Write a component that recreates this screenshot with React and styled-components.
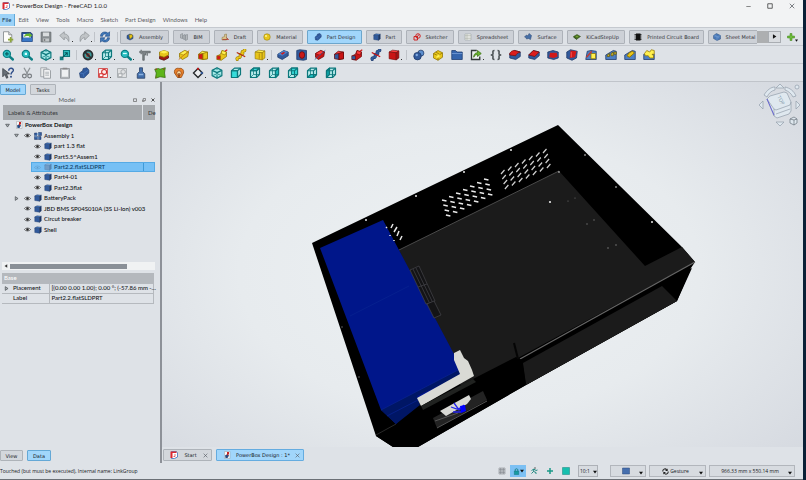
import React from "react";
import styled, { createGlobalStyle, css } from "styled-components";

const Global = createGlobalStyle`
  * { box-sizing: border-box; }
  html, body { margin: 0; background: #0a2036; }
  body, button, select, input, table {
    font-family: Lato, "Open Sans", sans-serif;
    font-size: 6px;
    line-height: 8px;
    color: #16181c;
  }
  button, select { margin: 0; padding: 0; border: 0; background: none; cursor: pointer; }
  svg { display: block; flex: none; }
`;

const Window = styled.div`
  display: flex;
  flex-direction: column;
  min-height: 100vh;
  margin-right: 3px;
  background: #dee2e7;
  border-bottom: 1px solid #6b7076;
`;
const TitleBar = styled.header`
  display: flex;
  align-items: center;
  height: 12px;
  padding-left: 2px;
  gap: 2px;
  background: #f2f3f4;
  h1 { flex: 1; margin: 0; font-size: 6px; font-weight: 400; color: #222; }
`;
const WindowButton = styled.button`
  display: grid;
  place-items: center;
  width: 22px;
  height: 12px;
`;
const MenuBar = styled.nav`
  display: flex;
  height: 15px;
  align-items: center;
  background: #f2f3f4;
`;
const MenuItem = styled.button`
  height: 12px;
  padding: 0 3px 0 ${(p) => (p.$active ? 2 : 3)}px;
  color: ${(p) => (p.$active ? "#16384f" : "#5c6065")};
  background: ${(p) => (p.$active ? "#9bd2f8" : "transparent")};
  border-right: 1px solid ${(p) => (p.$active ? "#62a9d8" : "transparent")};
`;
const ToolBar = styled.div`
  display: flex;
  align-items: center;
  height: 18px;
  overflow: hidden;
  border-top: 1px solid #c5c9cf;
`;
const ToolGroup = styled.div`
  display: flex;
  flex: none;
  justify-content: space-between;
  width: ${(p) => p.$width}px;
`;
const Separator = styled.i`
  flex: none;
  width: 1px;
  height: 10px;
  margin: 0 ${(p) => p.$gap || 3}px;
  background: #bfc3c9;
`;
const ToolButton = styled.button`
  position: relative;
  display: grid;
  place-items: center;
  width: 16px;
  height: 16px;
  ${(p) => p.$menu && css`
    &::after {
      content: "";
      position: absolute;
      right: 0;
      bottom: 3px;
      width: 1px;
      height: 1px;
      background: #333;
    }
  `}
`;
const Workbenches = styled.div`
  display: flex;
  flex: 1;
  min-width: 0;
  gap: 4px;
  overflow: hidden;
`;
const Workbench = styled.button`
  display: flex;
  flex: none;
  align-items: center;
  justify-content: center;
  gap: 5px;
  width: ${(p) => p.$width}px;
  height: 14px;
  color: #2d3035;
  border: 1px solid ${(p) => (p.$active ? "#6ca6cc" : "#adb2b9")};
  border-radius: 1px;
  background: ${(p) => (p.$active ? "#a1d6fb" : "#cdd1d7")};
  font-family: "DejaVu Sans", sans-serif;
  font-size: 5px;
  white-space: nowrap;
`;
const ScrollEnd = styled.div`
  display: flex;
  flex: none;
  width: 24px;
  height: 12px;
  background: #adafb1;
`;
const ScrollButton = styled.button`
  display: grid;
  place-items: center;
  width: 13px;
  height: 12px;
  margin-left: 11px;
  border: 1px solid #a9adb2;
  background: #d9dce0;
`;
const AddButton = styled.button`
  display: flex;
  align-items: center;
  justify-content: center;
  width: 22px;
  height: 16px;
  > svg + svg { align-self: flex-end; margin-bottom: 3px; }
`;
const Body = styled.main`
  display: flex;
  flex: 1;
  min-height: 0;
  border-top: 1px solid #c0c4ca;
`;
const SidePanel = styled.aside`
  display: flex;
  flex: none;
  flex-direction: column;
  width: 162px;
  padding-right: 5px;
  border-right: 2px solid #8d9198;
`;
const TabRow = styled.div`
  display: flex;
  gap: 4px;
  padding: ${(p) => (p.$bottom ? "0 0 2px" : "2px 0 0")};
`;
const PanelTab = styled.button`
  width: ${(p) => p.$width}px;
  height: 11px;
  border: 1px solid ${(p) => (p.$active ? "#64a8d6" : "#aeb3b9")};
  border-radius: 1px;
  background: ${(p) => (p.$active ? "#a1d6fb" : "#d3d7dc")};
  font-family: "DejaVu Sans", sans-serif;
  font-size: 5px;
`;
const DockTitle = styled.div`
  display: flex;
  align-items: center;
  height: 10px;
  gap: 4px;
  color: #565a60;
  span { flex: 1; padding-left: 6px; text-align: center; }
`;
const DockButton = styled.button`
  display: grid;
  place-items: center;
  width: 5px;
  height: 8px;
`;
const TreeHeader = styled.div`
  display: flex;
  align-items: center;
  height: 15px;
  margin-left: 3px;
  color: #35383c;
  background: #a5a9ad;
  span { flex: 1; padding-left: 5px; line-height: 15px; }
  span + span {
    flex: none;
    width: 13px;
    padding-left: 5px;
    border-left: 1px solid #dee2e7;
  }
`;
const Tree = styled.ul`
  display: grid;
  grid-template-rows: repeat(11, 1fr);
  height: 115px;
  margin: 0;
  padding: 0;
  list-style: none;
`;
const TreeRow = styled.li`
  display: flex;
  align-items: center;
  gap: 2px;
  margin-left: ${(p) => p.$indent}px;
  color: #0e1013;
  font-weight: ${(p) => (p.$bold ? 700 : 500)};
  white-space: nowrap;
  ${(p) => p.$selected && css`
    background: linear-gradient(90deg, transparent 112px, #3f9ad8 112px, #3f9ad8 113px, transparent 113px), #76c0f5;
    box-shadow: inset 0 0 0 1px #55aae5;
    color: #0d3c63;
  `}
`;
const Twist = styled.span`
  display: grid;
  place-items: center;
  width: 8px;
  margin-right: ${(p) => (p.$root ? 2 : 3)}px;
`;
const ScrollTrack = styled.div`
  display: flex;
  align-items: center;
  gap: 2px;
  height: 8px;
  margin: 27px 0 0 2px;
  padding-left: 2px;
  background: #f0f2f3;
`;
const ScrollThumb = styled.i`
  width: 117px;
  height: 5px;
  background: #8a9097;
`;
const Properties = styled.table`
  width: 152px;
  margin: 3px 2px 0;
  border-collapse: collapse;
  table-layout: fixed;
  font-weight: 500;
  th, td {
    height: 10px;
    padding: 0 0 0 2px;
    border: 1px solid #b5b9be;
    font-weight: inherit;
    text-align: left;
    white-space: nowrap;
  }
  th { border-left: 0; }
  thead th { border: 0; color: #fff; background: #b4b8bd; }
  tbody th { padding-left: 11px; }
`;
const NameColumn = styled.col`
  width: 47px;
`;
const PropName = styled.span`
  display: flex;
  align-items: center;
  gap: 4px;
  margin-left: ${(p) => (p.$open ? -9 : 0)}px;
`;
const Spacer = styled.div`
  flex: 1;
`;
const Stage = styled.section`
  display: flex;
  flex: 1;
  flex-direction: column;
  min-width: 0;
`;
const Viewport = styled.div`
  flex: 1;
  min-height: 0;
  background: radial-gradient(ellipse 72% 78% at 48% 52%, #edf1f3 0%, #e7ebee 50%, #d4d8df 100%);
  svg { width: 100%; height: 100%; }
`;
const DocumentTabs = styled.div`
  display: flex;
  gap: 4px;
  height: 16px;
  padding: 2px 1px;
`;
const DocumentTab = styled.div`
  display: flex;
  align-items: center;
  width: ${(p) => p.$width}px;
  height: 12px;
  padding: 0 3px 0 6px;
  border: 1px solid ${(p) => (p.$active ? "#65ace0" : "#aeb3b9")};
  border-radius: 1px;
  background: ${(p) => (p.$active ? "#a1d6fb" : "#d3d7dc")};
  > button { font-family: "DejaVu Sans", sans-serif; font-size: 5px; }
  > button:first-of-type { flex: 1; }
`;
const StatusBar = styled.footer`
  display: flex;
  align-items: center;
  height: 16px;
  padding-right: 8px;
  &, button, select { font-family: "Open Sans", sans-serif; font-size: 5px; }
  p { flex: 1; margin: 0; white-space: nowrap; }
`;
const StatusIcon = styled.button`
  display: flex;
  align-items: center;
  justify-content: center;
  width: 16px;
  height: 12px;
  background: ${(p) => (p.$active ? "#7cc0f3" : "transparent")};
`;
const LastIcon = styled(StatusIcon)`
  margin-right: 4px;
`;
const ZoomSelect = styled.select`
  width: 20px;
  height: 12px;
  margin-right: 12px;
  padding-left: 1px;
  appearance: none;
  border: 1px solid #adb1b7;
  background: #d7dbe0;
`;
const ZoomBox = styled.label`
  position: relative;
  display: flex;
  svg { position: absolute; right: 13px; top: 5px; pointer-events: none; }
`;
const StatusCombo = styled.button`
  display: flex;
  align-items: center;
  width: ${(p) => p.$width}px;
  height: 12px;
  margin-left: ${(p) => (p.$first ? 0 : 3)}px;
  padding: 0 2px;
  border: 1px solid #b2b6bc;
  background: #d7dbe0;
  > span { display: flex; flex: 1; align-items: center; justify-content: center; gap: 1px; }
  > svg { align-self: flex-end; margin-bottom: 1px; }
`;
const ControlsRow = styled.div`
  display: flex;
`;
const RowEye = styled.span`
  margin-left: ${(p) => p.$pad}px;
  margin-right: 1px;
`;

const BLUE = ["#4d7fc4", "#315a9c", "#1c3766"];
const YEL = ["#fff04e", "#e8c51a", "#8f7400"];
const RED = ["#ff3b3b", "#c91414", "#6a0808"];

const Box = ({ c = BLUE, front, top, side }) => (
  <g stroke={c[2]} strokeWidth=".8" strokeLinejoin="round">
    <path d="M1.500 4 6 1.500 14.500 2.500 11 5Z" fill={top || c[0]} />
    <path d="M1.500 4 11 5V14.500L1.500 13Z" fill={front || c[1]} />
    <path d="M11 5 14.500 2.500V12L11 14.500Z" fill={side || c[2]} />
  </g>
);
const WireCube = ({ fill = "none", face }) => (
  <g stroke="#0d787c" strokeWidth="1.600" strokeLinejoin="round" fill="none">
    <path d="M2 5 6 1.500H14V10L10 14H2Z" fill="#b9ecec" />
    {face === "front" && <path d="M2 5H10V14H2Z" fill={fill} />}
    {face === "top" && <path d="M2 5 6 1.500H14L10 5Z" fill={fill} />}
    {face === "right" && <path d="M10 5 14 1.500V10L10 14Z" fill={fill} />}
    {face === "rear" && <path d="M6 1.500H14V10H6Z" fill={fill} />}
    {face === "bottom" && <path d="M2 14 6 10H14L10 14Z" fill={fill} />}
    {face === "left" && <path d="M2 5 6 1.500V10L2 14Z" fill={fill} />}
    <path d="M2 5H10V14M10 5 14 1.500" />
    {face !== "front" && <path d="M6 1.500V10H14M6 10 2 14" strokeWidth="1" />}
  </g>
);
const IsoCube = () => (
  <g stroke="#0d787c" strokeWidth="1.600" strokeLinejoin="round" fill="#a5e9e8">
    <path d="M8 1 14.500 4.500V11.500L8 15 1.500 11.500V4.500Z" />
    <path d="M1.500 4.500 8 7.500 14.500 4.500M8 7.500V15" />
    <path d="M8 1V4M3 11 8 9 13 11" strokeWidth="1" />
  </g>
);
const Lens = ({ children }) => (
  <g>
    <path d="M9.500 9.500 14.500 14" stroke="#0b7f84" strokeWidth="3.200" strokeLinecap="round" />
    <circle cx="6.500" cy="6.500" r="4.800" fill="#29bfc1" stroke="#0b7f84" strokeWidth="1.600" />
    {children}
  </g>
);
const Body3 = ({ c = BLUE }) => (
  <g stroke={c[2]} strokeWidth=".8" strokeLinejoin="round">
    <path d="M2 8 6 5 7 2 12 1 14.500 4V8L8 14.500 3 14Z" fill={c[1]} />
    <path d="M2 8 7 9 14 4M7 9 8 14" fill="none" stroke={c[0]} />
  </g>
);

/* Feature glyphs share one silhouette per operation: yellow adds, red removes. */
const Revolve = ({ c, d }) => (
  <g strokeLinejoin="round">
    <path d="M2 6 9 2 14 4 13 10 6 14 2 11Z" fill={c[1]} stroke={c[2]} />
    <path d="M2 6 9 2 14 4 7 8Z" fill={c[0]} stroke={c[2]} strokeWidth=".7" />
    <path d="M1 14 15 2" stroke={d} strokeWidth="1.200" strokeDasharray="3 1" />
  </g>
);
const Loft = ({ c, d }) => (
  <g strokeLinejoin="round" stroke={c[2]}>
    <path d="M2 7 7 3 14 4V13L8 14Z" fill={c[0]} />
    <path d="M2 7 8 6V14L2 13Z" fill={d} />
    <path d="M8 6 14 4V13L8 14Z" fill={c[1]} />
  </g>
);
const Sweep = ({ c, d }) => (
  <g strokeLinejoin="round">
    <path d="M2 9 6 7 8 2 14 4 14 10 7 15 2 14Z" fill={c[1]} stroke={c[2]} />
    <path d="M8 2 14 4 12 8 7 6Z" fill={c[0]} stroke={c[2]} strokeWidth=".8" />
    <path d="M1 9H6V14H1Z" fill={d} stroke={c[2]} strokeWidth=".8" />
    <path d="M12 3 15 1" stroke="#d01818" strokeWidth="1.600" />
  </g>
);
const Helix = ({ c, d }) => (
  <g fill="none" strokeLinecap="round">
    <path d="M3 14C1 10 8 13 7 9S12 8 10 5 14 4 13 1" stroke={c[2]} strokeWidth="4" />
    <path d="M3 14C1 10 8 13 7 9S12 8 10 5 14 4 13 1" stroke={c[1]} strokeWidth="2.600" />
    <path d="M3 5 13 10" stroke={d} strokeWidth="1.800" />
  </g>
);

const ICONS = {
  app: <><path d="M3 1H13L15 4V12L9 15H3Z" fill="#fff" stroke="#3367b8" strokeWidth="1.500" /><path d="M1 1H13V4H5V14H1Z" fill="#dc2831" /><path d="M10 6V11H7" stroke="#dc2831" strokeWidth="1.400" fill="none" /></>,
  doc: <><path d="M3 1H14V15H3Z" fill="#f7f7f7" stroke="#9b9ea2" /><path d="M4 9 9 6 12 9 9 14H5Z" fill="#274c83" /><path d="M8 2H12V6L9 9H8Z" fill="#c62626" /></>,
  newDoc: <><path d="M2 1H9L13 5V15H2Z" fill="#fdfdfb" stroke="#777d80" /><path d="M9 1V5H13" fill="#ddd" stroke="#777d80" /><path d="M8 11.500H15M11.500 8V15" stroke="#8fa83a" strokeWidth="2.200" /></>,
  open: <><path d="M1 2H13L15 4V14H1Z" fill="#24519c" stroke="#142f60" /><path d="M3 4H13V9H3Z" fill="#f3f6f3" /><path d="M4 8C5 3 9 3 11 4V2L15 6 11 9V7C8 6 6 7 4 8Z" fill="#68b62c" /><path d="M1 14 3 9H15V14Z" fill="#3978c7" /></>,
  save: <><path d="M1.500 1.500H14.500V14.500H1.500Z" fill="#888d91" stroke="#62676b" /><path d="M4 2H12V7H4Z" fill="#d9dcde" /><path d="M4 10H12V14H4Z" fill="#c3c7c9" /><path d="M6 11V13" stroke="#666" strokeWidth="2" /></>,
  undo: <path d="M1 6 7 1V4C12 4 14 8 13 14 11 10 10 9 7 9V12Z" fill="#c0c4c7" stroke="#8f9498" />,
  redo: <path d="M15 6 9 1V4C4 4 2 8 3 14 5 10 6 9 9 9V12Z" fill="#c0c4c7" stroke="#8f9498" />,
  refresh: <><path d="M2 7C2 1 9 0 12 3L14 1V7H8L10 5C8 3 5 4 5 7Z" fill="#4179b9" stroke="#1b4680" strokeWidth=".8" /><path d="M14 9C14 15 7 16 4 13L2 15V9H8L6 11C8 13 11 12 11 9Z" fill="#4179b9" stroke="#1b4680" strokeWidth=".8" /></>,
  fitAll: <Lens><path d="M4 6.500H9M6.500 4V9" stroke="#0b6064" strokeWidth="1.600" /></Lens>,
  fitSel: <Lens><path d="M5 5H8V8H5Z" fill="#d9ffff" /></Lens>,
  zoomDd: <Lens><path d="M4 6H9" stroke="#d9ffff" strokeWidth="1.600" /></Lens>,
  iso: <IsoCube />,
  link: <><path d="M6 2H14V10H6Z" fill="#31c0c1" stroke="#0c777b" strokeWidth="1.500" /><path d="M1 10H6V15H1Z" fill="#177c80" /><path d="M4 12 11 5M7.500 5H11V8.500" stroke="#085359" strokeWidth="1.400" fill="none" /></>,
  noDraw: <><circle cx="8" cy="8" r="6" fill="#3f9c9c" stroke="#2b3032" strokeWidth="2.400" /><circle cx="8" cy="8" r="2.600" fill="#b8433a" /><path d="M3.500 3.500 12.500 12.500" stroke="#2b3032" strokeWidth="2.400" /></>,
  wire: <WireCube />,
  caliper: <><path d="M1 3H15V5H9V8H7V15H5V5H1Z" fill="#7f8589" stroke="#5a6063" /><path d="M3 1V7M11 5V9" stroke="#7d8386" strokeWidth="2" /></>,
  pad: <><path d="M2 10 8 7 14 9V12L8 15 2 13Z" fill="#a01a12" stroke="#54100c" /><path d="M2 4 8 2 14 4V8L8 11 2 9Z" fill={YEL[1]} stroke={YEL[2]} /><path d="M2 4 8 2 14 4 8 6Z" fill={YEL[0]} /></>,
  revolve: <Revolve c={YEL} d="#c46b10" />,
  loft: <Loft c={YEL} d="#d31919" />,
  sweep: <Sweep c={YEL} d="#d31919" />,
  helix: <Helix c={YEL} d="#b32d10" />,
  prim: <><Box c={YEL} side="#e8c51a" /><path d="M7 6V13" stroke="#a78200" /></>,
  pocket: <><path d="M1 7 9 2 15 4V9L7 14 1 11Z" fill={BLUE[1]} stroke={BLUE[2]} /><path d="M1 7 9 2 15 4 7 9Z" fill={BLUE[0]} /><path d="M5 6 9 4 11 5 7 7.500Z" fill="#d01818" /></>,
  hole: <><path d="M1 2 5 1 14 2V14L10 15 1 14Z" fill={BLUE[1]} stroke={BLUE[2]} /><ellipse cx="8" cy="8" rx="3.600" ry="4.500" fill="#c91818" stroke="#6a0808" /></>,
  groove: <Revolve c={RED} d="#315a9c" />,
  subLoft: <Loft c={RED} d="#315a9c" />,
  subSweep: <Sweep c={RED} d="#315a9c" />,
  subHelix: <Helix c={BLUE} d="#c91414" />,
  subPrim: <Box c={RED} side="#a81010" />,
  boolean: <><circle cx="10.500" cy="5.500" r="4" fill="#5c8fcf" stroke={BLUE[2]} /><circle cx="6" cy="9.500" r="5" fill={BLUE[1]} stroke={BLUE[2]} /><circle cx="5" cy="8" r="1.600" fill="#82abdf" /></>,
  part: <><path d="M2 6 8 2 14 5V11L8 15 2 12Z" fill={YEL[1]} stroke={YEL[2]} /><path d="M2 6 8 9 14 5M8 9V15M5 4 10 7" stroke={YEL[2]} fill="none" /><path d="M6 9 10 7V11L6 12Z" fill={YEL[0]} /></>,
  folder: <><path d="M1 2H6L8 4H15V14H1Z" fill="#3565ad" stroke="#1d3b6e" /><path d="M1 6H15" stroke="#7ba2db" /></>,
  linkMake: <><path d="M9 2H2V14H13V10" fill="#eef1f1" stroke="#33383a" strokeWidth="1.800" /><path d="M5 11C5 6 8 5 10 5V2L15 6 10 10V7.500C8 7.500 6 8 5 11Z" fill="#69b52d" stroke="#396f13" /></>,
  braces: <path d="M6 2C3 2 4 4 4 6S3 8 1 8C3 8 4 8 4 10S3 14 6 14M10 2C13 2 12 4 12 6S13 8 15 8C13 8 12 8 12 10S13 14 10 14" fill="none" stroke="#51575a" strokeWidth="2.200" />,
  fillet: <><path d="M1 6 7 2 15 4V10L9 14 1 12Z" fill={BLUE[1]} stroke={BLUE[2]} /><path d="M1 6C3 2 6 2 8 2L15 4C12 5 9 7 9 9L1 8Z" fill="#dc1d1d" stroke="#711" /></>,
  chamfer: <><path d="M1 8 7 2 15 4V9L9 14 1 12Z" fill={BLUE[1]} stroke={BLUE[2]} /><path d="M1 8 7 2 15 4 9 10Z" fill="#dc1d1d" stroke="#711" /></>,
  draft: <><path d="M1 4 8 2 15 4V12L9 14 1 12Z" fill={BLUE[1]} stroke={BLUE[2]} /><path d="M4 5 13 5 14 10 9 12 3 11Z" fill="#d11919" /></>,
  thick: <><path d="M1 4 6 1 15 3 14 12 8 15 1 12Z" fill={BLUE[1]} stroke={BLUE[2]} /><path d="M6 2 14 3 12 11 5 12Z" fill="#d11919" /><path d="M7 4V11" stroke="#ff6161" /></>,
  mirror: <><path d="M1 14 3 3 8 2 15 3V14Z" fill={BLUE[0]} stroke={BLUE[2]} /><path d="M8 6H14V13H8Z" fill={YEL[0]} stroke={YEL[2]} /><path d="M2 11 9 3" stroke="#c7382c" strokeWidth="1.800" /></>,
  linPat: <><path d="M1 14V8L11 2 15 3V14Z" fill={BLUE[0]} stroke={BLUE[2]} /><path d="M3 8 6 6V10H3ZM8 6 11 4V9H8ZM12 4H15V7H12Z" fill="#d0b92c" stroke="#635713" /></>,
  polPat: <><path d="M1 14V8L11 2 15 3V14Z" fill={BLUE[0]} stroke={BLUE[2]} /><path d="M4 9 7 5 11 3 14 5 11 8 7 11Z" fill={YEL[1]} stroke={YEL[2]} strokeWidth="1.300" /></>,
  multi: <><path d="M1 14V7H15V14Z" fill={BLUE[0]} stroke={BLUE[2]} /><path d="M2 6 5 2 9 4 11 1 15 2V7L12 7 14 9V12L9 12 7 9 3 9Z" fill={YEL[0]} stroke={YEL[2]} /></>,
  whats: <><path d="M1 2V13L4 10 6 15 8 14 6 9.500 10 9Z" fill="#687078" stroke="#363b40" /><path d="M9 5C9 0 16 1 15 5 14 7 12 7 12 10" stroke="#31508a" strokeWidth="2" fill="none" /><circle cx="12" cy="13" r="1.300" fill="#31508a" /></>,
  cut: <><path d="M4 1 9 10M12 1 7 10" stroke="#8d9296" strokeWidth="1.700" /><circle cx="4.500" cy="12" r="2.500" fill="none" stroke="#777c80" strokeWidth="1.600" /><circle cx="11.500" cy="12" r="2.500" fill="none" stroke="#777c80" strokeWidth="1.600" /></>,
  copy: <><path d="M1 1H9V13H1Z" fill="#e8eaeb" stroke="#92979b" /><path d="M5 3H12L14 5V15H5Z" fill="#f0f1f2" stroke="#858b90" /><path d="M7 7H12M7 9H12M7 11H12" stroke="#a4a9ad" /></>,
  paste: <><path d="M2 2H14V15H2Z" fill="#b8bcc0" stroke="#84898d" /><path d="M4 4H12V13H4Z" fill="#eef0f1" /><path d="M5 1H11V3H5Z" fill="#888" /></>,
  body: <Body3 />,
  sketch: <><path d="M2 2H14V14H2Z" fill="#fbeceb" stroke="#cf4a4a" strokeWidth="1.200" /><circle cx="9.500" cy="6.500" r="3.300" fill="none" stroke="#d32424" strokeWidth="1.400" /><path d="M3 9H8V13H3Z" fill="#fff" stroke="#d32424" strokeWidth="1.300" /></>,
  sketchOff: <><path d="M2 2H14V14H2Z" fill="#dfe1e3" stroke="#a6abaf" strokeWidth="1.200" /><circle cx="9.500" cy="6.500" r="3" fill="none" stroke="#a3a8ac" strokeWidth="1.300" /><path d="M3 9H8V13H3Z" fill="#f4f5f5" stroke="#a3a8ac" strokeWidth="1.300" /></>,
  valid: <><path d="M6 1H10V6L13 9V15H3V9L6 6Z" fill="#416daa" stroke="#263e62" /><path d="M5 10H11" stroke="#8bb1df" strokeWidth="2" /></>,
  shape: <><path d="M1 3 6 2 8 3 15 1 14 8 15 14 8 13 2 15 3 8Z" fill="#5db51a" stroke="#336c0c" /><path d="M3 2V4M13 2V4M3 13V14" stroke="#a83a20" strokeWidth="1.500" /></>,
  clone: <><path d="M2 8C1 2 6 1 8 2 11 1 15 3 14 8L11 14H6Z" fill="#e7822c" stroke="#904007" /><circle cx="8" cy="8" r="3" fill="#fbdc9f" stroke="#943d13" /><path d="M8 8V14" stroke="#752d0a" strokeWidth="1.500" /></>,
  datum: <><path d="M8 2 14 8 8 14 2 8Z" fill="#eceef0" stroke="#24272b" strokeWidth="1.800" /><circle cx="8" cy="2.500" r="1.600" fill="#b81c1c" /><circle cx="13" cy="8" r="1.600" fill="#315a9c" /></>,
  front: <WireCube face="front" fill="#37dcda" />,
  top: <WireCube face="top" fill="#37dcda" />,
  right: <WireCube face="right" fill="#1fbcbe" />,
  rear: <WireCube face="rear" fill="#37dcda" />,
  bottom: <WireCube face="bottom" fill="#1fbcbe" />,
  left: <WireCube face="left" fill="#0fa3a6" />,
  wbAssembly: <><path d="M2 5 8 2 14 5V11L8 14 2 11Z" fill={BLUE[1]} stroke={BLUE[2]} /><path d="M6 4 12 3 13 8 8 12Z" fill={YEL[1]} stroke={YEL[2]} /></>,
  wbBim: <g fill="#b5b9be" stroke="#777d83"><path d="M1 3 5 1V11L1 10ZM6 5 10 3V13L6 12ZM11 4 15 3V13L11 15Z" /></g>,
  wbDraft: <><path d="M2 14V9L7 7V3L11 2V14Z" fill="#d8c18c" stroke="#86703c" /><path d="M3 13H15L11 9" fill="none" stroke="#af3828" strokeWidth="1.600" /></>,
  wbMaterial: <><circle cx="8" cy="8" r="6.500" fill="#e8c71d" stroke="#8f7400" /><circle cx="6" cy="6" r="2.200" fill="#fff48c" /></>,
  cube: <Box />,
  cubeOff: <Box c={["#8fb8dd", "#719cc6", "#5683b1"]} />,
  wbSketch: <g fill="none" stroke="#cf2222" strokeWidth="2"><circle cx="10" cy="6" r="4.500" /><path d="M2 7H9V14H2Z" /><path d="M7 9 12 3" /></g>,
  wbSheet: <><path d="M2 2H14V14H2Z" fill="#f5f6f2" stroke="#93989a" /><path d="M2 5H14M2 8H14M2 11H14M6 2V14" stroke="#a0a79d" /></>,
  wbSurface: <path d="M1 8 5 4 8 6 10 1 15 5 13 13 9 11 5 12 4 9Z" fill="#466fa7" stroke="#284570" />,
  wbKicad: <><path d="M1 7 8 3 15 7 8 12Z" fill="#43731c" stroke="#263f0e" /><path d="M1 7V9L8 14V12Z" fill="#2b4b10" /><path d="M5 7 8 5 11 7 8 9Z" fill="#7a9e36" /></>,
  wbPcb: <><path d="M4 1H13V15H4Z" fill="#111" /><path d="M1 3H15M1 6H15M1 10H15M1 13H15" stroke="#111" strokeWidth="1.500" /></>,
  wbMetal: <><path d="M1 5 7 1 15 5V12L8 15 1 11Z" fill="#4a79b8" stroke="#2f517f" /><path d="M1 5 8 8 15 5M8 8V15M4 4 12 10" stroke="#7fa6d6" fill="none" /></>,
  add: <path d="M6 1H10V6H15V10H10V15H6V10H1V6H6Z" fill="#6cba3c" stroke="#3e8417" />,
  assembly: <><path d="M1 2H6V7H1ZM9 1H15V7H9ZM1 9H7V15H1ZM9 9H14V15H9Z" fill={BLUE[1]} stroke={BLUE[2]} /><path d="M5 4H11M4 6V11M6 12H11" stroke="#6fa7e0" strokeWidth="1.600" /></>,
  eye: <><path d="M1 8C4 3.500 12 3.500 15 8 12 12.500 4 12.500 1 8Z" fill="#f4f5f6" stroke="#33373b" strokeWidth="1.600" /><circle cx="8" cy="8" r="2.800" fill="#222" /></>,
  eyeOff: <><path d="M1 8C4 3.500 12 3.500 15 8 12 12.500 4 12.500 1 8Z" fill="none" stroke="#5f9ccb" strokeWidth="1.300" /><circle cx="8" cy="8" r="2" fill="#5f9ccb" /></>,
  treeOpen: <path d="M2 4H14L8 13Z" fill="#a7acb1" stroke="#3e4347" strokeWidth="2" />,
  treeClosed: <path d="M4 2V14L13 8Z" fill="#a7acb1" stroke="#3e4347" strokeWidth="2" />,
  arrowR: <path d="M3 1V15L14 8Z" fill="#111" />,
  arrowL: <path d="M13 1V15L2 8Z" fill="#333" />,
  arrowD: <path d="M0 3H16L8 14Z" fill="#111" />,
  close: <path d="M2 2 14 14M14 2 2 14" stroke="#555a60" strokeWidth="2" />,
  closeDark: <path d="M2 2 14 14M14 2 2 14" stroke="#222" strokeWidth="3" />,
  float: <path d="M2 3H14V14H2Z" fill="none" stroke="#555" strokeWidth="2.500" />,
  pin: <path d="M5 2H14V10H5ZM2 7V14H10" fill="none" stroke="#555" strokeWidth="2.400" />,
  min: <path d="M1 8H15" stroke="#333" strokeWidth="1.800" />,
  max: <path d="M2 2H14V14H2Z" fill="none" stroke="#333" strokeWidth="2" />,
  grid: <path d="M2 2V14M5 2V14M8 2V14M11 2V14M14 2V14M2 2H14M2 5H14M2 8H14M2 11H14M2 14H14" stroke="#74797e" strokeWidth="1" />,
  lock: <><path d="M5 8V4C5 1 11 1 11 4V8" fill="none" stroke="#147b83" strokeWidth="2" /><path d="M3 7H13V15H3Z" fill="#169ba2" stroke="#0c6d74" /></>,
  run: <><path d="M3 13 7 9 8 4 12 7 15 6M7 9 12 11V14M3 7 8 4" fill="none" stroke="#19857c" strokeWidth="1.900" /><circle cx="10" cy="2" r="1.600" fill="#555" /></>,
  plusTeal: <path d="M8 2V14M2 8H14" stroke="#1a9988" strokeWidth="3" />,
  green: <path d="M1 1H15V15H1Z" fill="#16bfae" stroke="#14857d" />,
  monitor: <path d="M1 2H15V14H1Z" fill="#466fae" stroke="#2c4a7c" />,
  gesture: <><path d="M2 8C1 3 7 0 11 4" fill="none" stroke="#222" strokeWidth="2.400" /><path d="M13 1V7H7Z" fill="#222" /><path d="M14 8C15 13 9 16 5 12" fill="none" stroke="#222" strokeWidth="2.400" /><path d="M3 15V9H9Z" fill="#222" /></>,
};

const Icon = ({ name, size = 12 }) => (
  <svg width={size} height={size} viewBox="0 0 16 16" aria-hidden="true">{ICONS[name]}</svg>
);

const Tools = ({ items, width }) => (
  <ToolGroup $width={width}>
    {items.split(" ").map((raw) => {
      const menu = raw.endsWith("+");
      const name = menu ? raw.slice(0, -1) : raw;
      return <ToolButton key={name} $menu={menu} aria-label={name}><Icon name={name} /></ToolButton>;
    })}
  </ToolGroup>
);

const WindowControls = () => (
  <ControlsRow>
    <WindowButton aria-label="Minimize"><Icon name="min" size={5} /></WindowButton>
    <WindowButton aria-label="Maximize"><Icon name="max" size={6} /></WindowButton>
    <WindowButton aria-label="Close window"><Icon name="close" size={6} /></WindowButton>
  </ControlsRow>
);

const MENUS = ["File", "Edit", "View", "Tools", "Macro", "Sketch", "Part Design", "Windows", "Help"];
const WORKBENCHES = [
  ["Assembly", "wbAssembly", 49], ["BIM", "wbBim", 37], ["Draft", "wbDraft", 39],
  ["Material", "wbMaterial", 46], ["Part Design", "body", 55], ["Part", "cube", 36],
  ["Sketcher", "wbSketch", 48], ["Spreadsheet", "wbSheet", 56], ["Surface", "wbSurface", 45],
  ["KiCadStepUp", "wbKicad", 58], ["Printed Circuit Board", "wbPcb", 75], ["Sheet Metal", "wbMetal", 52],
];
const TREE = [
  { label: "PowerBox Design", indent: 3, twist: "treeOpen", icon: "doc", bold: true },
  { label: "Assembly 1", indent: 12, twist: "treeOpen", eye: true, icon: "assembly" },
  { label: "part 1.3 flat", indent: 33, eye: true, icon: "cube" },
  { label: "Part5.5^Assem1", indent: 33, eye: true, icon: "cube" },
  { label: "Part2.2.flatSLDPRT", indent: 31, eye: true, icon: "cubeOff", selected: true },
  { label: "Part4-01", indent: 33, eye: true, icon: "cube" },
  { label: "Part2.3flat", indent: 33, eye: true, icon: "cube" },
  { label: "BatteryPack", indent: 12, twist: "treeClosed", eye: true, icon: "cube" },
  { label: "JBD BMS SP04S010A (3S Li-Ion) v003", indent: 23, eye: true, icon: "cube" },
  { label: "Circut breaker", indent: 23, eye: true, icon: "cube" },
  { label: "Shell", indent: 23, eye: true, icon: "cube" },
];

const ventRows = (x, y, cols, rows, dx, dy, rx, ry, sx, sy) => {
  let d = "";
  for (let r = 0; r < rows; r++)
    for (let c = 0; c < cols; c++)
      d += `M${x + c * dx + r * rx} ${y + c * dy + r * ry}l${sx} ${sy}`;
  return d;
};

const Model = () => (
  <svg viewBox="162 82 641 365" preserveAspectRatio="xMidYMid meet" role="img" aria-label="Enclosure model">
    <path d="M312 243 558 125 682 247 695 262 691 268 677 301 526 385 418 447H393L376 436Z" fill="#000" />
    <path d="M399 250 559 171 645 266 682 247 695 262 516 359 461 386 436 330Z" fill="#1b1b1b" />
    <path d="M399 250 559 171" stroke="#4a4a4a" />
    <path d="M520 361 692 268 677 301 526 385Z" fill="#000" />
    <path d="M523 363 662 286 677 301 526 385Z" fill="#1b1b1b" />
    <path d="M520 359 695 262" stroke="#656565" strokeWidth="1.300" />
    <path d="M473 379 516 357 522 360 526 385 418 447H393L376 436Z" fill="#000" />
    <path d="M514 343 518 359" stroke="#050505" strokeWidth="2" />
    <path d="M320 248 383 220 399 250 464 373 419 399 396 424 381 410Z" fill="#00168a" />
    <path d="M381 410 460 369 464 374 417 396 420 405 396 424Z" fill="#001665" />
    <path d="M381 410 460 369M387 416 418 400M350 316 409 286" stroke="#08228f" strokeWidth=".8" fill="none" />
    <path d="M376 435 396 424" stroke="#292929" />
    <path d="M454 353 460 350 464 358 468 361 472 370 474 376 421 406 417 398 460 374 454 360Z" fill="#d9dad5" />
    <path d="M421 406 473 379 476 382 423 410Z" fill="#202220" />
    <path d="M433 418 483 391 487 400 437 428Z" fill="#232323" />
    <path d="M435 421 458 413M437 428 487 401" stroke="#555" />
    <path d="M440 411 469 395 471 399 467 404 446 416Z" fill="#d8d9d5" />
    <path d="M451 407 457 409 463 407M454 403 459 410 464 405M453 412 461 412" fill="none" stroke="#2424ec" strokeWidth="1.300" />
    <path d="M460 406 465 405 466 411 461 413Z" fill="#0000ff" />
    <path d={ventRows(442, 200, 7, 4, 7, -3.500, 1.300, 5, 4.500, 1)} stroke="#e9e9e9" strokeWidth="1.400" />
    <path d={ventRows(501, 174, 7, 4, 7, -3.500, 1.300, 5, 3.500, -4)} stroke="#cfcfcf" strokeWidth="1.200" />
    <path d="M391 228 393 224M394 232 397 227M397 236 399 231M400 240 402 236M386 227 387 228M390 235V236M394 240V241" stroke="#e6e6e6" strokeWidth="1.500" />
    <g fill="#e8e8e8"><circle cx="366" cy="220" r="1" /><circle cx="416" cy="196" r="1" /><circle cx="464" cy="172" r="1" /><circle cx="511" cy="150" r="1" /><circle cx="559" cy="172" r=".8" /><circle cx="550" cy="202" r="1.100" /><circle cx="585" cy="155" r=".8" /><circle cx="616" cy="187" r=".8" /><circle cx="652" cy="222" r="1" /></g>
    <g fill="#777"><circle cx="587" cy="224" r=".7" /><circle cx="594" cy="220" r=".7" /><circle cx="608" cy="248" r=".8" /><circle cx="616" cy="245" r=".8" /><circle cx="568" cy="201" r=".6" /><circle cx="575" cy="198" r=".6" /><circle cx="342" cy="327" r=".7" /><circle cx="359" cy="377" r=".7" /></g>
    <g fill="#141416" stroke="#45454b" strokeWidth=".7"><path d="M410 270 419 266 435 301 426 304Z" /><path d="M413 269 429 302M416 268 432 301M418 287 427 284" /><path d="M427 304 434 301 441 315 434 318Z" /></g>

    <g fill="#dfe8ef" stroke="#929eaa" strokeWidth=".7" strokeLinejoin="round">
      <path d="M780 84 784 88H776ZM780 126 776 122H784ZM759 105 763 101V109ZM800 105 796 101V109Z" />
      <path d="M764 95C767 90 771 87 775 87V90C771 91 769 93 767 97ZM785 87C790 88 794 91 796 96L793 97C791 93 788 91 785 90Z" />
      <circle cx="797" cy="87" r="2" />
      <path d="M767 99 770 96 784 92 787 93 791 102V111L789 114 777 118 774 116Z" />
      <path d="M767 99 774 109 776 110 790 105 791 102M774 109V116M776 114 790 109" fill="none" />
      <path d="M790 119 794 117 797 119V123L794 125 790 123ZM790 119 794 120 797 119M794 120V125" stroke="#68737d" />
    </g>
    <path d="M767 99 774 115" stroke="#5751d8" strokeWidth=".8" />
    <text x="777" y="97" fontSize="5" fill="#7894a5" fontFamily="Open Sans, sans-serif" transform="rotate(60 777 97)">TOP</text>
  </svg>
);

export default function App() {
  return (
    <>
      <Global />
      <Window>
        <TitleBar>
          <Icon name="app" size={8} />
          <h1>* PowerBox Design - FreeCAD 1.0.0</h1>
          <WindowControls />
        </TitleBar>
        <MenuBar>
          {MENUS.map((m, i) => <MenuItem key={m} $active={i === 0}>{m}</MenuItem>)}
        </MenuBar>
        <ToolBar>
          <Tools width={92} items="newDoc open save undo+ redo+" />
          <Separator $gap={2} />
          <Tools width={18} items="refresh" />
          <Separator $gap={2} />
          <Workbenches>
            {WORKBENCHES.map(([label, icon, width]) => (
              <Workbench key={label} $width={width} $active={label === "Part Design"}>
                <Icon name={icon} size={8} />{label}
              </Workbench>
            ))}
          </Workbenches>
          <ScrollEnd><ScrollButton aria-label="Scroll workbenches"><Icon name="arrowR" size={5} /></ScrollButton></ScrollEnd>
          <AddButton aria-label="Add workbench"><Icon name="add" size={8} /><Icon name="arrowD" size={3} /></AddButton>
        </ToolBar>
        <ToolBar>
          <Tools width={73} items="fitAll fitSel iso+ link" />
          <Separator $gap={3} />
          <Tools width={188} items="noDraw+ wire+ zoomDd+ caliper pad revolve loft sweep helix prim+" />
          <Separator $gap={3} />
          <Tools width={127} items="pocket hole groove subLoft subSweep subHelix subPrim+" />
          <Separator $gap={4} />
          <Tools width={246} items="boolean part folder linkMake+ braces fillet chamfer draft thick mirror linPat polPat multi" />
        </ToolBar>
        <ToolBar>
          <Tools width={339} items="whats cut copy paste body sketch+ sketchOff valid shape clone datum+ iso front top right rear bottom left" />
        </ToolBar>
        <Body>
          <SidePanel>
            <TabRow>
              <PanelTab $width={26} $active>Model</PanelTab>
              <PanelTab $width={26}>Tasks</PanelTab>
            </TabRow>
            <DockTitle>
              <span>Model</span>
              <DockButton aria-label="Float"><Icon name="float" size={4} /></DockButton>
              <DockButton aria-label="Pin"><Icon name="pin" size={4} /></DockButton>
              <DockButton aria-label="Close"><Icon name="closeDark" size={4} /></DockButton>
            </DockTitle>
            <TreeHeader><span>Labels &amp; Attributes</span><span>De</span></TreeHeader>
            <Tree>
              {TREE.map((n) => (
                <TreeRow key={n.label} $indent={n.indent} $bold={n.bold} $selected={n.selected}>
                  {n.twist && <Twist $root={n.bold}><Icon name={n.twist} size={5} /></Twist>}
                  {n.eye && (
                    <RowEye $pad={n.twist ? -1 : n.selected ? 3 : 1}>
                      <Icon name={n.selected ? "eyeOff" : "eye"} size={7} />
                    </RowEye>
                  )}
                  <Icon name={n.icon} size={8} />
                  <span>{n.label}</span>
                </TreeRow>
              ))}
            </Tree>
            <ScrollTrack><Icon name="arrowL" size={4} /><ScrollThumb /></ScrollTrack>
            <Properties>
              <colgroup><NameColumn /><col /></colgroup>
              <thead><tr><th colSpan={2}>Base</th></tr></thead>
              <tbody>
                <tr><th scope="row"><PropName $open><Icon name="treeClosed" size={5} />Placement</PropName></th><td>[(0.00 0.00 1.00); 0.00 °; (-57.86 mm  -...</td></tr>
                <tr><th scope="row"><PropName>Label</PropName></th><td>Part2.2.flatSLDPRT</td></tr>
              </tbody>
            </Properties>
            <Spacer />
            <TabRow $bottom>
              <PanelTab $width={23}>View</PanelTab>
              <PanelTab $width={24} $active>Data</PanelTab>
            </TabRow>
          </SidePanel>
          <Stage>
            <Viewport><Model /></Viewport>
            <DocumentTabs>
              <DocumentTab $width={49}>
                <Icon name="app" size={8} /><button>Start</button>
                <button aria-label="Close Start"><Icon name="close" size={5} /></button>
              </DocumentTab>
              <DocumentTab $width={88} $active>
                <Icon name="doc" size={8} /><button>PowerBox Design : 1*</button>
                <button aria-label="Close PowerBox Design"><Icon name="close" size={5} /></button>
              </DocumentTab>
            </DocumentTabs>
          </Stage>
        </Body>
        <StatusBar>
          <p>Touched (but must be executed), Internal name: LinkGroup</p>
          <StatusIcon aria-label="Grid"><Icon name="grid" size={8} /></StatusIcon>
          <StatusIcon aria-label="Lock" $active><Icon name="lock" size={7} /><Icon name="arrowD" size={4} /></StatusIcon>
          <StatusIcon aria-label="Animate"><Icon name="run" size={8} /></StatusIcon>
          <StatusIcon aria-label="Add"><Icon name="plusTeal" size={8} /></StatusIcon>
          <LastIcon aria-label="Status"><Icon name="green" size={8} /></LastIcon>
          <ZoomBox>
            <ZoomSelect aria-label="Scale" defaultValue="10:1"><option>10:1</option></ZoomSelect>
            <Icon name="arrowD" size={4} />
          </ZoomBox>
          <StatusCombo $width={36} $first aria-label="Notifications"><span><Icon name="monitor" size={8} /></span><Icon name="arrowD" size={4} /></StatusCombo>
          <StatusCombo $width={57}><span><Icon name="gesture" size={7} />Gesture</span><Icon name="arrowD" size={4} /></StatusCombo>
          <StatusCombo $width={86}><span>966.33 mm x 550.14 mm</span><Icon name="arrowD" size={4} /></StatusCombo>
        </StatusBar>
      </Window>
    </>
  );
}
